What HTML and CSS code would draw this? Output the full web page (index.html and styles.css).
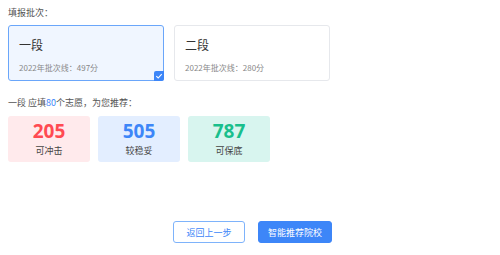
FILE: index.html
```html
<!DOCTYPE html>
<html>
<head>
<meta charset="utf-8">
<link rel="stylesheet" href="styles.css">
</head>
<body>
<div class="page">
  <div class="label">填报批次：</div>
  <div class="cards">
    <div class="card active">
      <div class="card-title">一段</div>
      <div class="card-sub">2022年批次线：497分</div>
      <span class="check"><svg width="8" height="8" viewBox="0 0 8 8"><path d="M1.3 4.2 L3.2 6 L6.7 2.2" fill="none" stroke="#fff" stroke-width="1.1"/></svg></span>
    </div>
    <div class="card">
      <div class="card-title">二段</div>
      <div class="card-sub">2022年批次线：280分</div>
    </div>
  </div>
  <div class="hint">一段 应填<span class="blue">80</span>个志愿，为您推荐：</div>
  <div class="stats">
    <div class="stat red"><div class="num">205</div><div class="cap">可冲击</div></div>
    <div class="stat blu"><div class="num">505</div><div class="cap">较稳妥</div></div>
    <div class="stat grn"><div class="num">787</div><div class="cap">可保底</div></div>
  </div>
  <div class="actions">
    <button class="btn ghost">返回上一步</button>
    <button class="btn primary">智能推荐院校</button>
  </div>
</div>
</body>
</html>
```

FILE: styles.css
```css
* { box-sizing: border-box; }
html, body { margin: 0; padding: 0; background: #fff; }
body { font-family: "Noto Sans CJK SC", "Noto Sans", sans-serif; color: #333; }
.page { width: 500px; height: 255px; padding: 5px 8px 0 8px; display: flex; flex-direction: column; }
.label { font-size: 9px; line-height: 15px; color: #555; height: 15px; }
.cards { display: flex; gap: 10px; margin-top: 5px; }
.card { position: relative; width: 156px; height: 56px; border: 1px solid #e6e8ec; border-radius: 3px; padding: 10px 10px 0 10px; background: #fff; }
.card.active { background: #f0f6ff; border-color: #6aa6fa; }
.card-title { font-size: 12px; line-height: 18px; color: #333; }
.card-sub { font-size: 8px; line-height: 12px; color: #888; margin-top: 8px; }
.check { position: absolute; right: -1px; bottom: -1px; width: 10px; height: 10px; background: #3d86f8; border-radius: 2px 0 2px 0; display: flex; align-items: center; justify-content: center; }
.check svg { display: block; }
.hint { font-size: 9px; line-height: 14px; color: #555; margin-top: 15px; }
.blue { color: #3d86f8; }
.stats { display: flex; gap: 8px; margin-top: 6px; }
.stat { width: 82px; height: 46px; border-radius: 3px; display: flex; flex-direction: column; align-items: center; padding-top: 4px; }
.stat .num { font-family: "Open Sans", "Noto Sans", sans-serif; font-weight: 700; font-size: 19px; line-height: 22px; }
.stat .cap { font-size: 9px; line-height: 14px; color: #444; margin-top: 2px; }
.stat.red { background: #ffeaec; }
.stat.red .num { color: #ff4a52; }
.stat.blu { background: #e3eeff; }
.stat.blu .num { color: #3d86f8; }
.stat.grn { background: #d8f5ef; }
.stat.grn .num { color: #19bf8c; }
.actions { display: flex; justify-content: center; gap: 13px; margin-top: 59px; padding-left: 5px; }
.btn { height: 22px; border-radius: 3px; font-family: "Noto Sans CJK SC", sans-serif; font-size: 9px; padding: 0; cursor: pointer; }
.btn.ghost { width: 72px; background: #fff; border: 1px solid #7eb3fb; color: #3d86f8; }
.btn.primary { width: 74px; background: #3d86f8; border: 1px solid #3d86f8; color: #fff; }
```
